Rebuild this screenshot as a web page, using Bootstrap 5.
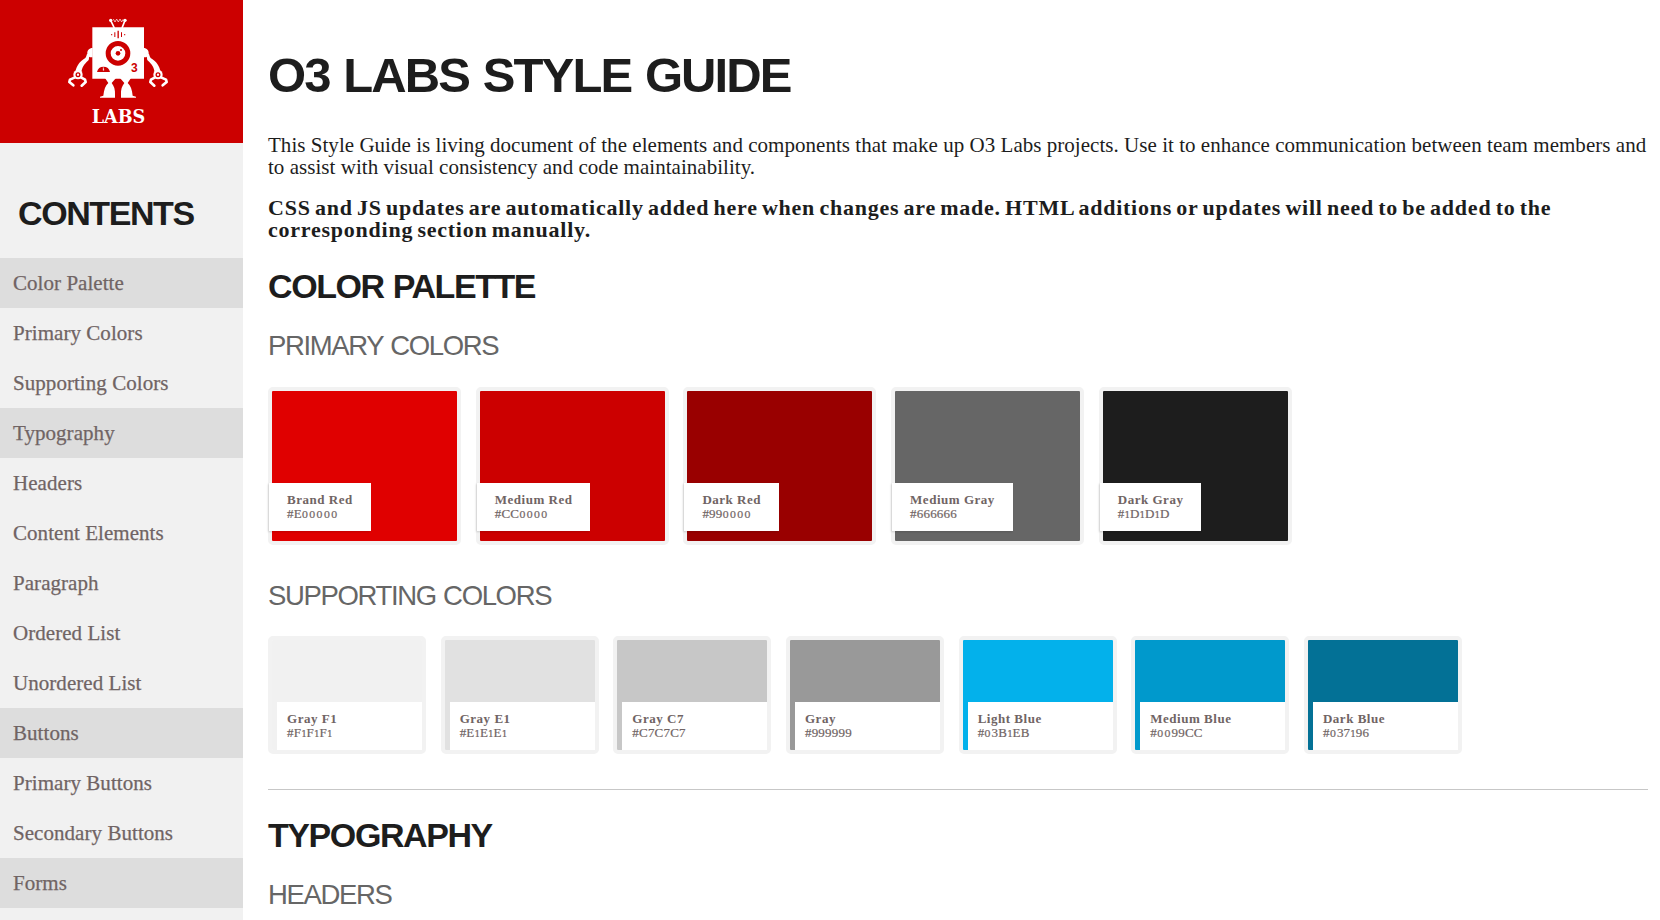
<!DOCTYPE html>
<html lang="en">
<head>
<meta charset="utf-8">
<meta name="viewport" content="width=device-width, initial-scale=1">
<title>O3 Labs Style Guide</title>
<link href="https://cdn.jsdelivr.net/npm/bootstrap@5.3.0/dist/css/bootstrap.min.css" rel="stylesheet">
<style>
body{font-family:"Liberation Serif",serif;color:#1d1d1d;background:#fff;height:920px;overflow:hidden}
.sidebar{width:243px;background:#f1f1f1;height:920px}
.logo{height:143px;background:#c00;padding-left:50px}
h1,h2,h3{font-family:"Liberation Sans",sans-serif;text-transform:uppercase;white-space:nowrap;margin:0}
h1{font-size:49px;font-weight:700;line-height:60px;letter-spacing:-1.9px;word-spacing:2px;margin-top:45px}
h2{font-size:34px;font-weight:700;line-height:40px;letter-spacing:-1.42px;word-spacing:1px;margin-top:25px}
h3{font-size:27.5px;font-weight:400;line-height:32px;letter-spacing:-1.35px;word-spacing:1px;margin-top:24px;margin-bottom:-1px;color:#666}
.sidebar h2{margin:50px 0 25px 18px}
.sidebar .nav-link{height:50px;padding:0 0 0 13px;font-size:21px;line-height:50px;letter-spacing:.05px;color:#706464;white-space:nowrap;-webkit-text-stroke:.25px #706464}
.sidebar .nav-link.group{background:#ddd}
.guide{padding:0 12px 0 25px}
.guide p{font-size:21px;line-height:22px;letter-spacing:.035px;margin:29px 0 0;white-space:nowrap}
.guide p.notice{font-size:22px;font-weight:700;letter-spacing:.76px;word-spacing:-2px;margin-top:19px}
.primary{gap:14.7px;margin-top:26px}
.supporting{gap:14.66px;margin-top:25px}
.primary+h3{margin-top:35px}
.tile{border:4px solid #f2f2f2;border-radius:5px;flex:none}
.fill{border-radius:1px}
.primary .tile{width:193px}
.primary .fill{height:150px;padding-top:92px}
.supporting .tile{width:158px}
.supporting .fill{height:110px;padding:62px 0 0 5px}
.tag{background:#fff;height:48px;padding-top:10px;font-size:13px;line-height:14px;color:#706464;white-space:nowrap}
.tag b{display:block;letter-spacing:.52px}
.tag span{display:block;letter-spacing:.2px;-webkit-text-stroke:.2px #706464}
.tag i{font:10px/1 "DejaVu Serif",serif;letter-spacing:.9px}
.tag i.one{font-size:9px;letter-spacing:-.3px}
.primary .tag{width:max-content;margin-left:-3px;padding-left:18px;padding-right:18px;box-shadow:-1px 1px 2px rgba(0,0,0,.15)}
.supporting .tag{padding-left:10px}
.guide hr{height:1px;margin:35px 0 0;border:0;background:#c7c7c7;opacity:1}
</style>
</head>
<body>
<div class="d-flex">
<aside class="sidebar flex-shrink-0">
<div class="logo">
<svg class="d-block" width="140" height="143" viewBox="0 0 420 429" fill="#fff" aria-label="Labs robot">
<!-- antennae -->
<path d="M182 61L193 84M225 61L216 84" stroke="#fff" stroke-width="5"/>
<circle cx="182" cy="61" r="5"/><circle cx="225" cy="61" r="5"/>
<path d="M190 57l5 9 5-9 5 9 5-9 5 9 4-8" fill="none" stroke="#fff" stroke-width="2"/>
<!-- head and body -->
<path d="M127 82H282V236H127z"/>
<g fill="#c00">
<path d="M193 97h3v14h-3zM202.500 92h4v23h-4zM213 97h3v14h-3z"/>
<circle cx="185" cy="104" r="2"/><circle cx="224" cy="104" r="2"/>
<path d="M141 216a20 20 0 0 1 39 0z"/>
</g>
<path d="M160 202l2 9h-3z" stroke="#fff"/>
<circle cx="204" cy="160" r="29.500" fill="none" stroke="#c00" stroke-width="15"/>
<circle cx="204" cy="160" r="7" fill="#c00"/><circle cx="213" cy="150" r="3" fill="#c00"/>
<text x="243" y="216" font-family="Liberation Sans,sans-serif" font-size="36" font-weight="700" fill="#c00">3</text>
<!-- left arm, mirrored for the right -->
<g id="arm">
<path d="M128 144c-11 0-17 8-16 17-3 3-2 8-6 13-19 12-26 24-30 42l18 3c1-16 8-26 20-37 4-3 2-8 4-12 3 2 6 2 10 2z"/>
<circle cx="84" cy="224" r="14"/><circle cx="84" cy="224" r="5.500" fill="none" stroke="#c00" stroke-width="4"/>
<path d="M75 232L60 239L58 246L70 256M93 232L105 239L107 246L95 257" fill="none" stroke="#fff" stroke-width="8" stroke-linecap="round" stroke-linejoin="round"/>
</g>
<use href="#arm" transform="translate(408 0) scale(-1 1)"/>
<!-- legs -->
<g id="leg"><path d="M165 234h33l-13 15c7 9 11 20 10 35v9h-45v-3l10-3c2-18 6-30 15-38z"/></g>
<use href="#leg" transform="translate(408 0) scale(-1 1)"/>
<text x="125" y="370" font-family="DejaVu Serif,serif" font-size="57" font-weight="700" textLength="161" lengthAdjust="spacingAndGlyphs">LABS</text>
</svg>
</div>
<h2>Contents</h2>
<nav class="nav flex-column flex-nowrap">
<a class="nav-link group">Color Palette</a>
<a class="nav-link">Primary Colors</a>
<a class="nav-link">Supporting Colors</a>
<a class="nav-link group">Typography</a>
<a class="nav-link">Headers</a>
<a class="nav-link">Content Elements</a>
<a class="nav-link">Paragraph</a>
<a class="nav-link">Ordered List</a>
<a class="nav-link">Unordered List</a>
<a class="nav-link group">Buttons</a>
<a class="nav-link">Primary Buttons</a>
<a class="nav-link">Secondary Buttons</a>
<a class="nav-link group">Forms</a>
</nav>
</aside>
<main class="guide flex-grow-1">
<h1>O3 Labs Style Guide</h1>
<p>This Style Guide is living document of the elements and components that make up O3 Labs projects. Use it to enhance communication between team members and<br>to assist with visual consistency and code maintainability.</p>
<p class="notice">CSS and JS updates are automatically added here when changes are made. HTML additions or updates will need to be added to the<br>corresponding section manually.</p>
<h2>Color Palette</h2>
<h3>Primary Colors</h3>
<div class="primary d-flex">
<div class="tile"><div class="fill" style="background:#e00000"><div class="tag"><b>Brand Red</b><span>#E<i>00000</i></span></div></div></div>
<div class="tile"><div class="fill" style="background:#cc0000"><div class="tag"><b>Medium Red</b><span>#CC<i>0000</i></span></div></div></div>
<div class="tile"><div class="fill" style="background:#990000"><div class="tag"><b>Dark Red</b><span>#99<i>0000</i></span></div></div></div>
<div class="tile"><div class="fill" style="background:#666666"><div class="tag"><b>Medium Gray</b><span>#666666</span></div></div></div>
<div class="tile"><div class="fill" style="background:#1d1d1d"><div class="tag"><b>Dark Gray</b><span>#<i class="one">1</i>D<i class="one">1</i>D<i class="one">1</i>D</span></div></div></div>
</div>
<h3>Supporting Colors</h3>
<div class="supporting d-flex">
<div class="tile"><div class="fill" style="background:#f1f1f1"><div class="tag"><b>Gray F1</b><span>#F<i class="one">1</i>F<i class="one">1</i>F<i class="one">1</i></span></div></div></div>
<div class="tile"><div class="fill" style="background:#e1e1e1"><div class="tag"><b>Gray E1</b><span>#E<i class="one">1</i>E<i class="one">1</i>E<i class="one">1</i></span></div></div></div>
<div class="tile"><div class="fill" style="background:#c7c7c7"><div class="tag"><b>Gray C7</b><span>#C7C7C7</span></div></div></div>
<div class="tile"><div class="fill" style="background:#999999"><div class="tag"><b>Gray</b><span>#999999</span></div></div></div>
<div class="tile"><div class="fill" style="background:#03b1eb"><div class="tag"><b>Light Blue</b><span>#<i>0</i>3B<i class="one">1</i>EB</span></div></div></div>
<div class="tile"><div class="fill" style="background:#0099cc"><div class="tag"><b>Medium Blue</b><span>#<i>00</i>99CC</span></div></div></div>
<div class="tile"><div class="fill" style="background:#037196"><div class="tag"><b>Dark Blue</b><span>#<i>0</i>37<i class="one">1</i>96</span></div></div></div>
</div>
<hr>
<h2>Typography</h2>
<h3>Headers</h3>
</main>
</div>
<script src="https://cdn.jsdelivr.net/npm/bootstrap@5.3.0/dist/js/bootstrap.bundle.min.js"></script>
</body>
</html>
